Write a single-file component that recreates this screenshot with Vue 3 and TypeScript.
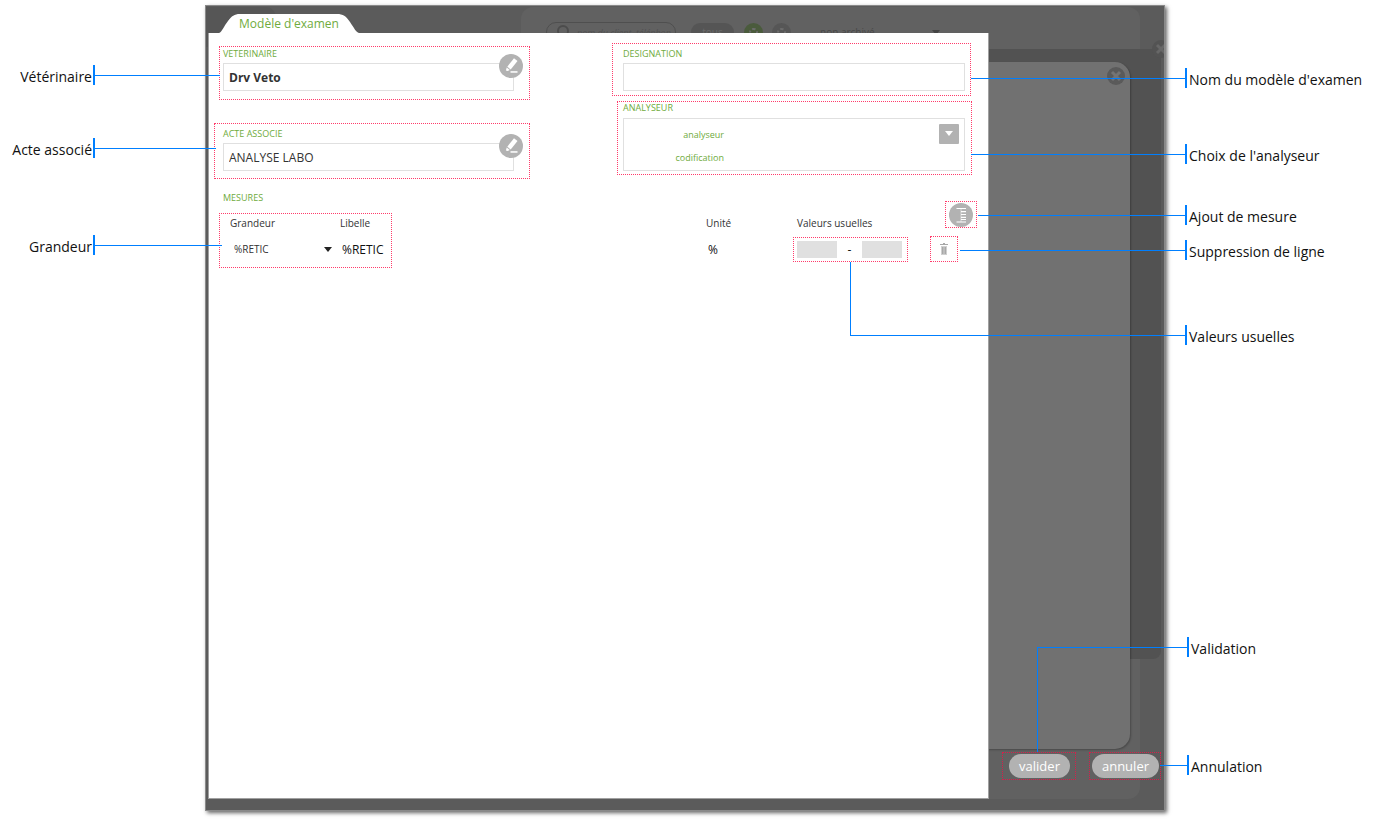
<script setup lang="ts">
import { computed, ref } from 'vue'

interface Box {
  id: string
  side: 'left' | 'right'
  x: number
  y: number
  w: number
  h: number
  fromBottom?: boolean
}
interface Callout {
  text: string
  side: 'left' | 'right'
  y: number
  reach: number
  inset?: boolean
  fromBottom?: boolean
}
interface Mesure {
  id: number
  grandeur: string
  libelle: string
  unite: string
  min: string
  max: string
}

const veterinaire = ref('Drv Veto')
const acte = ref('ANALYSE LABO')
const designation = ref('')
const analyseur = ref('')
const codification = ref('')
const mesures = ref<Mesure[]>([
  { id: 1, grandeur: '%RETIC', libelle: '%RETIC', unite: '%', min: '', max: '' },
])

function ajouter() {
  mesures.value.push({ id: Date.now(), grandeur: '%RETIC', libelle: '%RETIC', unite: '%', min: '', max: '' })
}
function supprimer(id: number) {
  mesures.value = mesures.value.filter((m) => m.id !== id)
}

// x counts from the named side of the page, y from its top (or its bottom)
const boxes: Box[] = [
  { id: 'veterinaire', side: 'left', x: 219, y: 46, w: 311, h: 54 },
  { id: 'acte', side: 'left', x: 214, y: 123, w: 316, h: 56 },
  { id: 'grandeur', side: 'left', x: 219, y: 213, w: 173, h: 55 },
  { id: 'designation', side: 'right', x: 408, y: 43, w: 359, h: 53 },
  { id: 'analyseur', side: 'right', x: 407, y: 101, w: 355, h: 74 },
  { id: 'ajout', side: 'right', x: 402, y: 201, w: 32, h: 27 },
  { id: 'suppression', side: 'right', x: 421, y: 236, w: 28, h: 26 },
  { id: 'valeurs', side: 'right', x: 471, y: 237, w: 115, h: 25 },
  { id: 'valider', side: 'right', x: 303, y: 40, w: 74, h: 28, fromBottom: true },
  { id: 'annuler', side: 'right', x: 218, y: 40, w: 72, h: 28, fromBottom: true },
]
const stems: Box[] = [
  { id: 'valeurs', side: 'right', x: 528, y: 262, w: 1, h: 74 },
  { id: 'valider', side: 'right', x: 341, y: 68, w: 1, h: 105, fromBottom: true },
]
const callouts: Callout[] = [
  { text: 'Vétérinaire', side: 'left', y: 65, reach: 220 },
  { text: 'Acte associé', side: 'left', y: 138, reach: 216 },
  { text: 'Grandeur', side: 'left', y: 235, reach: 222 },
  { text: "Nom du modèle d'examen", side: 'right', y: 68, reach: 408 },
  { text: "Choix de l'analyseur", side: 'right', y: 144, reach: 408 },
  { text: 'Ajout de mesure', side: 'right', y: 205, reach: 401 },
  { text: 'Suppression de ligne', side: 'right', y: 240, reach: 419 },
  { text: 'Valeurs usuelles', side: 'right', y: 325, reach: 529 },
  { text: 'Validation', side: 'right', y: 163, reach: 342, inset: true, fromBottom: true },
  { text: 'Annulation', side: 'right', y: 45, reach: 219, inset: true, fromBottom: true },
]

const boxStyle = (b: Box) => ({
  [b.side]: `${b.x}px`,
  [b.fromBottom ? 'bottom' : 'top']: `${b.y}px`,
  width: `${b.w}px`,
  height: `${b.h}px`,
})
const placedCallouts = computed(() =>
  callouts.map((c) => ({
    ...c,
    style: { [c.fromBottom ? 'bottom' : 'top']: `${c.y}px`, width: `${c.reach}px` },
  })),
)
</script>

<template>
  <div class="page">
    <main class="window">
      <div class="backdrop" aria-hidden="true">
        <div class="layer corner"></div>
        <div class="layer sheet">
          <div class="toolbar">
            <span class="search">
              <svg width="16" height="18" viewBox="0 0 16 18"><circle cx="9" cy="8" r="5" /><path d="M5.500 12 1 18" /></svg>
              nom du client, téléphon
            </span>
            <span class="all">tous</span>
            <span class="dot green"><i></i></span>
            <span class="dot"><i></i></span>
            <span class="archive">non archivé</span>
            <span class="caret"></span>
          </div>
        </div>
        <div class="layer dark"></div>
        <div class="layer mid"></div>
        <svg class="cross outer" viewBox="0 0 18 18"><circle cx="9" cy="9" r="9" /><path d="m5 5 8 8M13 5l-8 8" /></svg>
        <svg class="cross inner" viewBox="0 0 18 18"><circle cx="9" cy="9" r="9" /><path d="m5 5 8 8M13 5l-8 8" /></svg>
      </div>

      <form class="editor" @submit.prevent>
        <div class="body">
          <h1 class="tab">
            <svg viewBox="0 0 140 19" preserveAspectRatio="none" aria-hidden="true">
              <path d="M0 19C3 18 5 12 9 7C13 2 15 0 21 0H118C124 0 127 2 131 8C135 14 137 18 140 19Z" />
            </svg>
            <span>Modèle d'examen</span>
          </h1>

          <section class="panel">
            <div class="columns">
              <div class="left">
                <div class="field">
                  <label for="veterinaire">VETERINAIRE</label>
                  <input id="veterinaire" v-model="veterinaire" class="strong" type="text" />
                  <button class="round edit" type="button" aria-label="Modifier le vétérinaire">
                    <svg viewBox="0 0 24 24">
                      <path d="M15 4.200 18.500 7 11.700 15.400 8.300 12.700z" />
                      <path d="M7.700 13.500 10.800 16 8.700 17 6.900 16.400z" />
                      <path d="M11.500 17.200h7v1.500h-7z" />
                    </svg>
                  </button>
                </div>
                <div class="field">
                  <label for="acte">ACTE ASSOCIE</label>
                  <input id="acte" v-model="acte" type="text" />
                  <button class="round edit" type="button" aria-label="Modifier l'acte">
                    <svg viewBox="0 0 24 24">
                      <path d="M15 4.200 18.500 7 11.700 15.400 8.300 12.700z" />
                      <path d="M7.700 13.500 10.800 16 8.700 17 6.900 16.400z" />
                      <path d="M11.500 17.200h7v1.500h-7z" />
                    </svg>
                  </button>
                </div>
              </div>

              <div class="right">
                <div class="field">
                  <label for="designation">DESIGNATION</label>
                  <input id="designation" v-model="designation" type="text" />
                </div>
                <fieldset class="field">
                  <legend>ANALYSEUR</legend>
                  <div class="group">
                    <label for="analyseur">analyseur</label>
                    <span class="choice">
                      <select id="analyseur" v-model="analyseur"><option value=""></option></select>
                      <svg viewBox="0 0 20 20" aria-hidden="true"><rect width="20" height="20" rx="1" /><path d="M6 7h8l-4 5z" /></svg>
                    </span>
                    <label for="codification">codification</label>
                    <input id="codification" v-model="codification" type="text" />
                  </div>
                </fieldset>
              </div>
            </div>

            <header class="measures">
              <h2>MESURES</h2>
              <button class="round add" type="button" aria-label="Ajouter une mesure" @click="ajouter">
                <svg viewBox="0 0 24 24"><path d="M7.500 5.500H17M12 8.700h5M12 11.500h5M12 14.300h5M12 16.500h5M7.500 19H17" /><path class="spine" d="M12 5.500V19" /></svg>
              </button>
            </header>

            <table>
              <thead>
                <tr>
                  <th class="c-size">Grandeur</th>
                  <th>Libelle</th>
                  <th class="c-unit">Unité</th>
                  <th class="c-values">Valeurs usuelles</th>
                  <td class="c-action"></td>
                </tr>
              </thead>
              <tbody>
                <tr v-for="m in mesures" :key="m.id">
                  <td>
                    <span class="size">
                      <select v-model="m.grandeur" aria-label="Grandeur"><option>%RETIC</option></select>
                      <svg viewBox="0 0 8 5" aria-hidden="true"><path d="M0 0h8L4 5z" /></svg>
                    </span>
                  </td>
                  <td class="label">{{ m.libelle }}</td>
                  <td class="unit">{{ m.unite }}</td>
                  <td>
                    <span class="range">
                      <input v-model="m.min" type="text" aria-label="Valeur minimale" />
                      <span>-</span>
                      <input v-model="m.max" type="text" aria-label="Valeur maximale" />
                    </span>
                  </td>
                  <td>
                    <button class="trash" type="button" aria-label="Supprimer la ligne" @click="supprimer(m.id)">
                      <svg viewBox="0 0 8 12"><path class="bin" d="M1 3h6v9H1z" /><path d="M0 1.500h8M3 .5h2M2.500 4v7M4 4v7M5.500 4v7" /></svg>
                    </button>
                  </td>
                </tr>
              </tbody>
            </table>
          </section>
        </div>

        <footer class="actions">
          <button type="submit">valider</button>
          <button type="button">annuler</button>
        </footer>
      </form>
    </main>

    <div class="notes">
      <span v-for="b in boxes" :key="b.id" class="outline" :class="{ deep: b.fromBottom }" :style="boxStyle(b)"></span>
      <span v-for="s in stems" :key="s.id" class="stem" :style="boxStyle(s)"></span>
      <div
        v-for="c in placedCallouts"
        :key="c.text"
        class="callout"
        :class="[c.side, { inset: c.inset }]"
        :style="c.style"
      >
        <span class="text">{{ c.text }}</span><i class="bar"></i><i class="line"></i>
      </div>
    </div>
  </div>
</template>

<style>
body {
  margin: 0;
  background: #fff;
}
</style>

<style scoped>
* {
  box-sizing: border-box;
}
.page {
  position: relative;
  min-height: 100vh;
  padding: 5px 214px 9px 205px;
  font-family: 'Open Sans', 'Noto Sans', sans-serif;
  font-size: 12px;
  color: #333;
}
button,
input,
select {
  font: inherit;
  color: inherit;
  margin: 0;
  padding: 0;
  border: 0;
  border-radius: 0;
  background: none;
}
button {
  cursor: pointer;
}
.window {
  position: relative;
  display: flex;
  min-height: calc(100vh - 14px);
  background: #5b5b5b;
  border: 1px solid #8a8a8a;
  box-shadow: 2px 2px 4px rgba(0, 0, 0, 0.6);
}

/* dimmed application behind the editor */
.backdrop {
  position: absolute;
  inset: 0;
  overflow: hidden;
}
.layer {
  position: absolute;
}
.corner {
  left: 0;
  top: 1px;
  width: 70px;
  height: 40px;
  background: #565656;
  border-radius: 0 10px 0 0;
}
.sheet {
  left: 315px;
  right: 24px;
  top: 1px;
  bottom: 11px;
  background: #616161;
  border-radius: 12px;
}
.dark {
  left: 315px;
  right: 3px;
  top: 43px;
  bottom: 151px;
  background: #525252;
  border-radius: 0 0 8px 0;
}
.mid {
  left: 315px;
  right: 34px;
  top: 56px;
  bottom: 61px;
  background: #717171;
  border-radius: 0 15px 15px 0;
  box-shadow: 1px 1px 2px rgba(0, 0, 0, 0.25);
}
.cross {
  position: absolute;
  width: 18px;
  height: 18px;
  fill: #5a5a5a;
  stroke: #747474;
  stroke-width: 3;
}
.cross circle {
  stroke: none;
}
.outer {
  right: -6px;
  top: 34px;
  fill: #535353;
  stroke: #676767;
}
.inner {
  right: 39px;
  top: 61px;
}
.toolbar {
  display: flex;
  align-items: center;
  height: 20px;
  margin: 15px 0 0 25px;
  font-size: 10px;
  color: #484848;
}
.search {
  display: flex;
  align-items: center;
  gap: 7px;
  width: 130px;
  height: 20px;
  padding-left: 7px;
  margin-right: 15px;
  border: 1px solid #4f4f4f;
  border-radius: 10px;
  white-space: nowrap;
  font-size: 9px;
  font-style: italic;
  color: #505050;
}
.search svg {
  flex: none;
  fill: none;
  stroke: #4c4c4c;
  stroke-width: 2;
}
.all {
  width: 43px;
  margin-right: 10px;
  line-height: 18px;
  text-align: center;
  background: #555;
  border-radius: 9px;
  color: #6a6a6a;
}
.dot {
  display: grid;
  place-items: center;
  width: 19px;
  height: 19px;
  margin-right: 9px;
  border-radius: 50%;
  background: #565656;
}
.dot i {
  width: 9px;
  height: 9px;
  border: 2px dotted #6c6c6c;
  border-radius: 50%;
}
.green {
  background: #4a5b3c;
}
.archive {
  width: 112px;
  margin-left: 20px;
}
.caret {
  border: 4px solid transparent;
  border-top: 5px solid #444;
  border-bottom: 0;
}

/* editor */
.editor {
  position: relative;
  display: flex;
  flex: 1;
  padding: 8px 4px 12px 3px;
}
.body {
  flex: 1;
  display: flex;
  flex-direction: column;
}
.tab {
  position: relative;
  width: 140px;
  margin: 0 0 0 10px;
  font-size: 12px;
  line-height: 19px;
  font-weight: 400;
  text-align: center;
  color: #6fab3d;
}
.tab svg {
  position: absolute;
  inset: 0;
  width: 100%;
  height: 100%;
  fill: #fff;
}
.tab span {
  position: relative;
}
.panel {
  flex: 1;
  padding: 12px 15px 12px 14px;
  background: #fff;
  box-shadow: 0 0 0 1px #a0a0a0;
  clip-path: inset(0 -1px -1px -1px);
}
.columns {
  display: flex;
  justify-content: space-between;
  padding-right: 8px;
}
.left {
  width: 291px;
}
.right {
  width: 342px;
}
.left .field + .field {
  margin-top: 34px;
}
.right .field + .field {
  margin-top: 9px;
}
.field {
  position: relative;
  margin: 0;
  padding: 0;
  border: 0;
  min-width: 0;
}
.field > label,
legend,
h2 {
  display: block;
  margin: 0;
  padding: 0;
  font-size: 9px;
  line-height: 18px;
  font-weight: 400;
  color: #6fab3d;
}
legend {
  padding-bottom: 2px;
  line-height: 16px;
}
.field > input {
  display: block;
  width: 100%;
  height: 28px;
  padding: 0 5px;
  border: 1px solid #e0e0e0;
}
.strong {
  font-weight: 700;
}
.round {
  display: block;
  width: 24px;
  height: 24px;
  border-radius: 50%;
  background: #b2b2b2;
}
.round svg {
  display: block;
  fill: #fff;
}
.edit {
  position: absolute;
  right: -9px;
  top: 9px;
}
.group {
  display: grid;
  grid-template-columns: 100px 1fr;
  grid-auto-rows: 22px;
  gap: 1px 10px;
  align-items: center;
  height: 53px;
  padding: 4px 5px 0 0;
  border: 1px solid #e0e0e0;
}
.group label {
  font-size: 9px;
  text-align: right;
  color: #6fab3d;
}
.group > input {
  width: 100%;
  height: 20px;
}
.choice {
  position: relative;
  height: 20px;
}
.choice select {
  width: 100%;
  height: 20px;
  appearance: none;
}
.choice svg {
  position: absolute;
  right: 0;
  top: 0;
  width: 20px;
  height: 20px;
  fill: #b2b2b2;
  pointer-events: none;
}
.choice path {
  fill: #fff;
}
.measures {
  display: flex;
  justify-content: space-between;
  height: 18px;
  margin-top: 18px;
}
.add {
  margin-top: 14px;
}
.add svg {
  fill: none;
  stroke: #fff;
  stroke-width: 1.2;
}
.add .spine {
  stroke-width: 0.5;
}
table {
  width: 100%;
  margin-top: 3px;
  border-collapse: collapse;
  table-layout: fixed;
}
th,
td {
  height: 26px;
  padding: 0;
  text-align: left;
  font-weight: 400;
}
th {
  padding-bottom: 1px;
  font-size: 10px;
}
.c-size {
  width: 117px;
  padding-left: 7px;
}
.c-unit {
  width: 91px;
}
.c-values {
  width: 133px;
}
.c-action {
  width: 43px;
}
.size {
  display: flex;
  align-items: center;
  padding: 0 8px 0 11px;
}
.size select {
  flex: 1;
  appearance: none;
  font-size: 10px;
}
.size svg {
  width: 8px;
  height: 5px;
  fill: #222;
}
.label,
.unit {
  padding-left: 2px;
  color: #111;
}
.range {
  display: flex;
  align-items: center;
}
.range span {
  width: 25px;
  text-align: center;
  color: #111;
}
.range input {
  width: 40px;
  height: 17px;
  background: #e0e0e0;
}
.trash {
  display: grid;
  place-items: center;
  width: 27px;
  height: 26px;
}
.trash svg {
  width: 8px;
  height: 12px;
  fill: none;
  stroke: #a8a8a8;
}
.trash .bin {
  fill: #d0d0d0;
  stroke: none;
}
.actions {
  display: flex;
  justify-content: flex-end;
  align-items: flex-end;
  gap: 22px;
  width: 172px;
  padding: 0 1px 20px 0;
}
.actions button {
  height: 24px;
  padding: 0 10px;
  border-radius: 12px;
  background: #b2b2b2;
  font-size: 13px;
  line-height: 24px;
  color: #fff;
}

/* annotations over the window */
.notes {
  position: absolute;
  inset: 0;
  pointer-events: none;
}
.outline {
  position: absolute;
  border: 1px dotted #ff3b6b;
}
.deep {
  border-color: #d81e4a;
}
.stem {
  position: absolute;
  background: #007fff;
}
.callout {
  position: absolute;
  display: flex;
  align-items: center;
  height: 20px;
  font-size: 14px;
  line-height: 20px;
  white-space: nowrap;
  color: #111;
}
.callout.left {
  left: 0;
}
.callout.right {
  right: 0;
  flex-direction: row-reverse;
}
.text {
  padding-top: 3px;
}
.left .text {
  width: 93px;
  padding-right: 1px;
  text-align: right;
}
.right .text {
  width: 192px;
  padding-left: 2px;
}
.inset .text {
  width: 190px;
}
.bar {
  width: 2px;
  height: 20px;
  background: #007fff;
}
.line {
  flex: 1;
  height: 1px;
  background: #007fff;
}
</style>
